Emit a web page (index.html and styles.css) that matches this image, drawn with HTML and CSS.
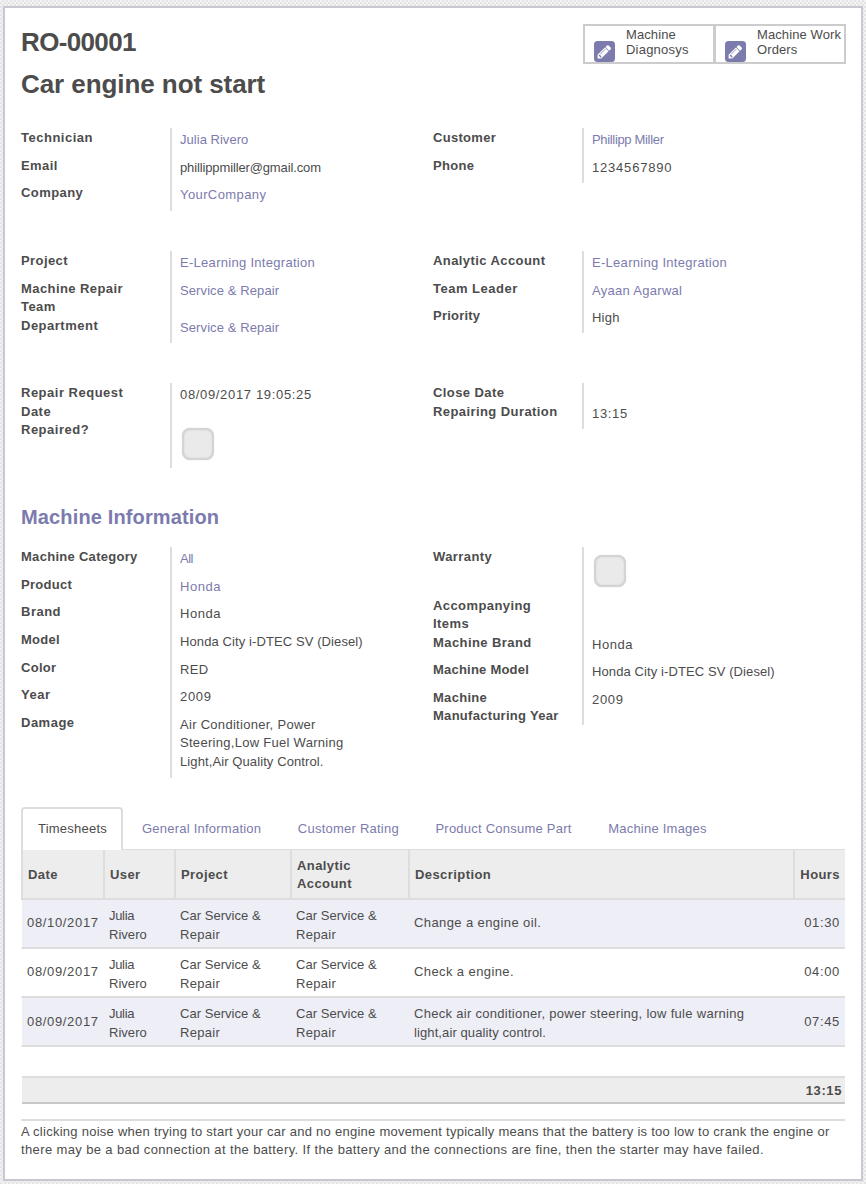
FILE: index.html
```html
<!DOCTYPE html>
<html lang="en">
<head>
<meta charset="utf-8">
<title>RO-00001</title>
<link rel="stylesheet" href="styles.css">
</head>
<body>
<main class="sheet">
  <header class="top">
    <div class="titles">
      <h1 class="ref">RO-00001</h1>
      <h1>Car engine not start</h1>
    </div>
    <div class="stat-buttons">
      <button class="stat">
        <svg class="pencil" viewBox="0 0 21 21"><rect width="21" height="21" rx="3.5" fill="#7c7bad"/><path fill="#fff" transform="translate(3.6 16.4) scale(.0088 -.0088)" d="M363 0l91 91l-235 235l-91 -91v-107h128v-128h107zM886 928q0 22 -22 22q-10 0 -17 -7l-542 -542q-7 -7 -7 -17q0 -22 22 -22q10 0 17 7l542 542q7 7 7 17zM832 1120l416 -416l-832 -832h-416v416zM1515 1024q0 -53 -37 -90l-166 -166l-416 416l166 165q36 38 90 38q53 0 91 -38l235 -234q37 -39 37 -91z"/></svg>
        <span><span class="t1">Machine</span><br><span class="t2">Diagnosys</span></span>
      </button>
      <button class="stat">
        <svg class="pencil" viewBox="0 0 21 21"><rect width="21" height="21" rx="3.5" fill="#7c7bad"/><path fill="#fff" transform="translate(3.6 16.4) scale(.0088 -.0088)" d="M363 0l91 91l-235 235l-91 -91v-107h128v-128h107zM886 928q0 22 -22 22q-10 0 -17 -7l-542 -542q-7 -7 -7 -17q0 -22 22 -22q10 0 17 7l542 542q7 7 7 17zM832 1120l416 -416l-832 -832h-416v416zM1515 1024q0 -53 -37 -90l-166 -166l-416 416l166 165q36 38 90 38q53 0 91 -38l235 -234q37 -39 37 -91z"/></svg>
        <span class="t1">Machine Work<br>Orders</span>
      </button>
    </div>
  </header>

  <section class="groups">
    <dl class="group">
      <div><dt class="t5">Technician</dt><dd class="t0"><a>Julia Rivero</a></dd></div>
      <div><dt>Email</dt><dd class="tn1">phillippmiller@gmail.com</dd></div>
      <div><dt>Company</dt><dd><a>YourCompany</a></dd></div>
    </dl>
    <dl class="group">
      <div><dt class="t3">Customer</dt><dd class="tn3"><a>Phillipp Miller</a></dd></div>
      <div><dt class="t3">Phone</dt><dd class="t8">1234567890</dd></div>
    </dl>
  </section>

  <section class="groups">
    <dl class="group">
      <div><dt>Project</dt><dd class="t3"><a>E-Learning Integration</a></dd></div>
      <div><dt>Machine Repair<br>Team</dt><dd class="t1"><a>Service &amp; Repair</a></dd></div>
      <div><dt class="t5">Department</dt><dd class="t1"><a>Service &amp; Repair</a></dd></div>
    </dl>
    <dl class="group">
      <div><dt>Analytic Account</dt><dd class="t3"><a>E-Learning Integration</a></dd></div>
      <div><dt class="t5">Team Leader</dt><dd class="t3"><a>Ayaan Agarwal</a></dd></div>
      <div><dt class="t2">Priority</dt><dd class="t2">High</dd></div>
    </dl>
  </section>

  <section class="groups">
    <dl class="group">
      <div><dt class="t5">Repair Request<br>Date</dt><dd class="t7">08/09/2017 19:05:25</dd></div>
      <div><dt class="t5">Repaired?</dt><dd class="check"><i class="box"></i></dd></div>
    </dl>
    <dl class="group">
      <div><dt>Close Date</dt><dd class="none"></dd></div>
      <div><dt>Repairing Duration</dt><dd class="t7">13:15</dd></div>
    </dl>
  </section>

  <h2>Machine Information</h2>
  <section class="groups last">
    <dl class="group">
      <div><dt class="t3">Machine Category</dt><dd class="tn5"><a>All</a></dd></div>
      <div><dt class="t3">Product</dt><dd class="t6"><a>Honda</a></dd></div>
      <div><dt class="t5">Brand</dt><dd class="t6">Honda</dd></div>
      <div><dt class="t3">Model</dt><dd class="t1">Honda City i-DTEC SV (Diesel)</dd></div>
      <div><dt class="t3">Color</dt><dd class="t3">RED</dd></div>
      <div><dt class="t5">Year</dt><dd class="t7">2009</dd></div>
      <div><dt class="t5">Damage</dt><dd class="t3">Air Conditioner, Power<br>Steering,Low Fuel Warning<br><span class="t1">Light,Air Quality Control.</span></dd></div>
    </dl>
    <dl class="group">
      <div><dt>Warranty</dt><dd class="check"><i class="box"></i></dd></div>
      <div><dt>Accompanying<br>Items</dt><dd class="none"></dd></div>
      <div><dt>Machine Brand</dt><dd class="t6">Honda</dd></div>
      <div><dt class="t2">Machine Model</dt><dd class="t1">Honda City i-DTEC SV (Diesel)</dd></div>
      <div><dt class="t3">Machine<br>Manufacturing Year</dt><dd class="t7">2009</dd></div>
    </dl>
  </section>

  <nav class="tabs">
    <a class="tab active">Timesheets</a>
    <a class="tab">General Information</a>
    <a class="tab">Customer Rating</a>
    <a class="tab">Product Consume Part</a>
    <a class="tab">Machine Images</a>
  </nav>

  <table class="lines">
    <colgroup><col class="c-date"><col class="c-user"><col class="c-project"><col class="c-account"><col class="c-desc"><col class="c-hours"></colgroup>
    <thead>
      <tr><th>Date</th><th>User</th><th>Project</th><th>Analytic<br>Account</th><th>Description</th><th class="num">Hours</th></tr>
    </thead>
    <tbody>
      <tr><td class="t7">08/10/2017</td><td class="two t0"><span class="tn3">Julia</span><br>Rivero</td><td class="two t3"><span class="t0">Car Service &amp;</span><br>Repair</td><td class="two t3"><span class="t0">Car Service &amp;</span><br>Repair</td><td>Change a engine oil.</td><td class="num t7">01:30</td></tr>
      <tr><td class="t7">08/09/2017</td><td class="two t0"><span class="tn3">Julia</span><br>Rivero</td><td class="two t3"><span class="t0">Car Service &amp;</span><br>Repair</td><td class="two t3"><span class="t0">Car Service &amp;</span><br>Repair</td><td>Check a engine.</td><td class="num t7">04:00</td></tr>
      <tr><td class="t7 low">08/09/2017</td><td class="two t0"><span class="tn3">Julia</span><br>Rivero</td><td class="two t3"><span class="t0">Car Service &amp;</span><br>Repair</td><td class="two t3"><span class="t0">Car Service &amp;</span><br>Repair</td><td class="two t3">Check air conditioner, power steering, low fule warning<br><span class="t1">light,air quality control.</span></td><td class="num low t7">07:45</td></tr>
    </tbody>
  </table>
  <div class="total">13:15</div>
  <p class="note"><span class="first">A clicking noise when trying to start your car and no engine movement typically means that the battery is too low to crank the engine or</span><br>there may be a bad connection at the battery. If the battery and the connections are fine, then the starter may have failed.</p>
</main>
</body>
</html>
```
FILE: styles.css
```css
* { box-sizing: border-box; }
body {
  margin: 0;
  height: 1184px;
  padding: 6px 3px 3px;
  overflow: hidden;
  font: 13px/18.5px "Liberation Sans", Arial, sans-serif;
  letter-spacing: .4px;
  color: #4c4c4c;
  background: repeating-conic-gradient(#e4e4e4 0 25%, #f3f3f3 0 50%) 0 0 / 4px 4px;
}
.sheet {
  width: 860px;
  height: 1175px;
  padding: 16px;
  background: #fff;
  border: 2px solid #c8c8d3;
}
.top { display: flex; justify-content: space-between; height: 104px; }
h1 { margin: 0; padding-top: 5px; font-size: 26px; line-height: 26px; letter-spacing: -.07px; }
h1 + h1 { padding-top: 16px; }
h1.ref { letter-spacing: -.65px; }
.stat-buttons { display: flex; height: 40px; border: 2px solid #ccc; width: 263px; margin-right: -1px; }
.stat {
  display: flex;
  width: 128px;
  padding: 1px 0 0 9px;
  gap: 11px;
  border: 0;
  background: none;
  font: 13px/15px "Liberation Sans", Arial, sans-serif;
  color: #4c4c4c;
  text-align: left;
  white-space: nowrap;
}
.stat + .stat { border-left: 3px solid #ccc; width: 131px; }
.pencil { width: 21px; height: 21px; margin-top: 14px; flex: none; }
.groups { display: grid; grid-template-columns: 412px 412px; align-items: start; margin-bottom: 40px; }
.group {
  margin: 0;
  background: linear-gradient(#ddd, #ddd) 149px 0 / 2px 100% no-repeat;
}
.group > div { display: grid; grid-template-columns: 159px 1fr; }
dt { position: relative; top: 1.3px; font-weight: bold; letter-spacing: .42px; }
dd { margin: 0; padding: 3.2px 0 5.9px; }
.last dt { top: .8px; }
.last dd { padding: 2.8px 0 6.3px; }
dd.none, .last dd.none { padding: 0; }
dd.check, .last dd.check { padding: 8px 2px; height: 48.5px; }
a { color: #7c7bad; }
.box {
  display: block;
  width: 32px;
  height: 32px;
  background: #eaeaea;
  border: 2px solid #d4d4d4;
  border-radius: 8px;
  box-shadow: 0 0 1px #ccc, inset 0 0 2px #d4d4d4;
}
h2 { margin: -2px 0 19px; font-size: 20px; line-height: 22px; letter-spacing: .14px; color: #7c7bad; }
.groups.last { margin-bottom: 29.5px; }
.tabs { display: flex; height: 43px; border-bottom: 1px solid #ddd; letter-spacing: .23px; }
.tab { padding: 13px 0 0 17px; margin-right: 19.6px; white-space: nowrap; }
.tab.active {
  width: 102px;
  height: 43px;
  margin-right: 2px;
  padding: 11px 0 0 15px;
  color: #4c4c4c;
  background: #fff;
  border: 2px solid #ddd;
  border-bottom: 0;
  border-radius: 4px 4px 0 0;
}
.lines { width: 824px; table-layout: fixed; border-collapse: separate; border-spacing: 0; }
.c-date { width: 82px; }
.c-user { width: 71px; }
.c-project { width: 116px; }
.c-account { width: 118px; }
.c-desc { width: 385px; }
.c-hours { width: 52px; }
th, td { padding: 0; text-align: left; white-space: nowrap; border-bottom: 2px solid #ddd; }
th {
  height: 50px;
  padding: 2px 0 0 5px;
  line-height: 18px;
  letter-spacing: .42px;
  background: #ededed;
  border-left: 2px solid #ddd;
}
td { height: 49px; padding-left: 6px; line-height: 18.5px; }
td.two { padding-top: 2px; line-height: 19px; }
td.low { padding-top: 2px; }
td:first-child { border-left: 1px solid transparent; padding-left: 5px; background-clip: padding-box; }
tbody tr:nth-child(odd) td { background-color: #eeeef7; }
.num { text-align: right; padding-left: 0; padding-right: 5px; }
.total {
  height: 28px;
  margin: 29px 0 15px 1px;
  padding-right: 3px;
  line-height: 26px;
  text-align: right;
  font-weight: bold;
  letter-spacing: .6px;
  background: #ededed;
  border-top: 2px solid #ddd;
  border-bottom: 2px solid #c8c8c8;
}
.note { margin: 0; padding-top: 2px; border-top: 2px solid #ddd; line-height: 18px; letter-spacing: .375px; white-space: nowrap; }
.note .first { letter-spacing: .26px; }

/* letter tracking steps */
.tn5 { letter-spacing: -.5px; }
.tn3 { letter-spacing: -.33px; }
.tn1 { letter-spacing: -.13px; }
.t0 { letter-spacing: .03px; }
.t1 { letter-spacing: .1px; }
.t2 { letter-spacing: .22px; }
.t3 { letter-spacing: .29px; }
.t5 { letter-spacing: .5px; }
.t6 { letter-spacing: .55px; }
.t7 { letter-spacing: .66px; }
.t8 { letter-spacing: .8px; }
```
